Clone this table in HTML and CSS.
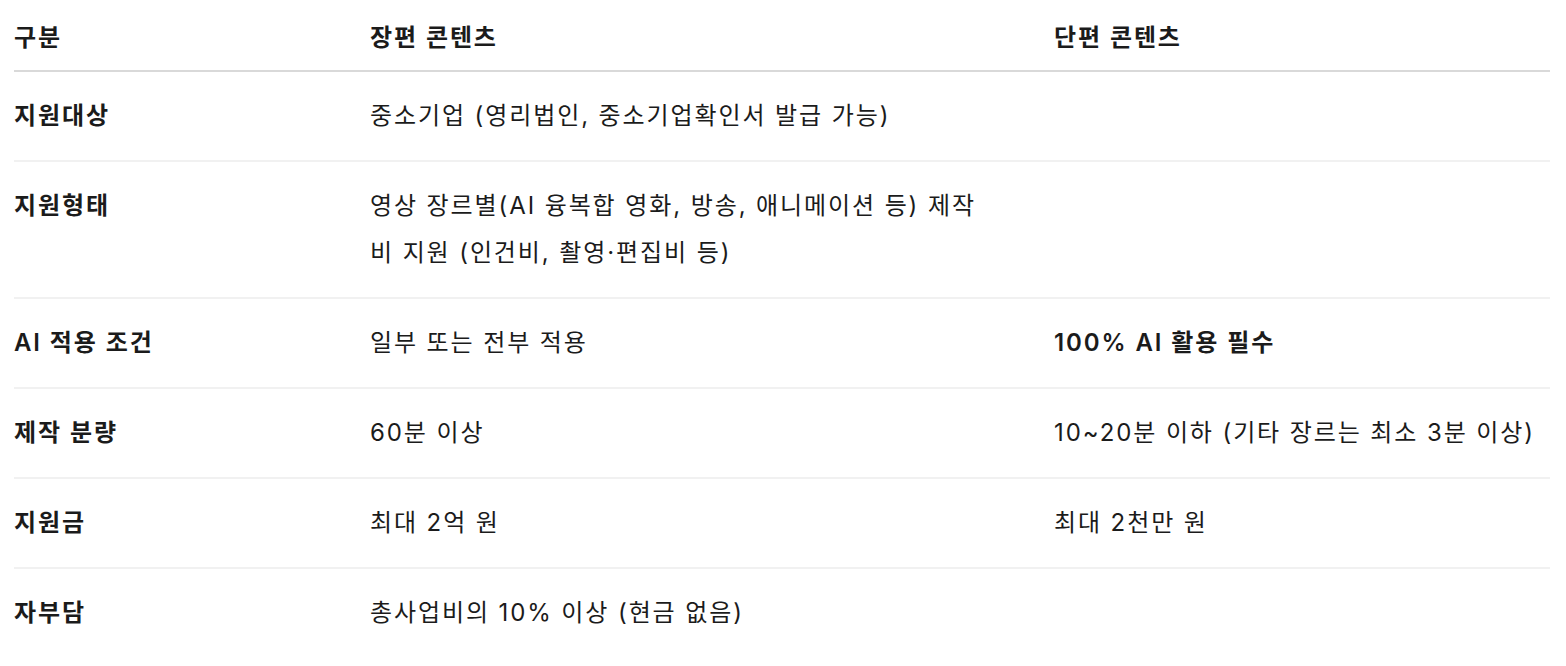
FILE: index.html
```html
<!DOCTYPE html>
<html lang="ko">
<head>
<meta charset="utf-8">
<title>지원 비교</title>
<link rel="stylesheet" href="styles.css">
</head>
<body>
<div class="table">
  <div class="row head">
    <div class="cell c1">구분</div>
    <div class="cell c2">장편 콘텐츠</div>
    <div class="cell c3">단편 콘텐츠</div>
  </div>
  <div class="row">
    <div class="cell c1">지원대상</div>
    <div class="cell c2">중소기업 (영리법인, 중소기업확인서 발급 가능)</div>
    <div class="cell c3"></div>
  </div>
  <div class="row">
    <div class="cell c1">지원형태</div>
    <div class="cell c2">영상 장르별(AI 융복합 영화, 방송, 애니메이션 등) 제작비 지원 (인건비, 촬영·편집비 등)</div>
    <div class="cell c3"></div>
  </div>
  <div class="row">
    <div class="cell c1">AI 적용 조건</div>
    <div class="cell c2">일부 또는 전부 적용</div>
    <div class="cell c3"><strong>100% AI 활용 필수</strong></div>
  </div>
  <div class="row">
    <div class="cell c1">제작 분량</div>
    <div class="cell c2">60분 이상</div>
    <div class="cell c3">10~20분 이하 (기타 장르는 최소 3분 이상)</div>
  </div>
  <div class="row">
    <div class="cell c1">지원금</div>
    <div class="cell c2">최대 2억 원</div>
    <div class="cell c3">최대 2천만 원</div>
  </div>
  <div class="row last">
    <div class="cell c1">자부담</div>
    <div class="cell c2">총사업비의 10% 이상 (현금 없음)</div>
    <div class="cell c3"></div>
  </div>
</div>
</body>
</html>
```

FILE: styles.css
```css
html, body {
  margin: 0;
  padding: 0;
  background: #ffffff;
}
body {
  font-family: Inter, "Noto Sans CJK KR", sans-serif;
  font-size: 24px;
  letter-spacing: 1.9px;
  color: #1b1b1b;
}
.table {
  margin: 0 16px 0 14px;
  display: flex;
  flex-direction: column;
}
.row {
  display: grid;
  grid-template-columns: 356px 684px 1fr;
  border-bottom: 2px solid #f1f1f1;
  line-height: 47px;
}
.row.head {
  border-bottom-color: #d9d9d9;
}
.row.last {
  border-bottom: none;
}
.cell {
  padding: 20px 16px 21px 0;
}
.head .cell {
  padding: 14px 16px 9px 0;
  font-weight: 600;
}
.c1 {
  font-weight: 600;
}
.c2 {
  padding-right: 74px;
}
.row .c3 {
  padding-right: 0;
}
.cell strong {
  font-weight: 600;
}
```
